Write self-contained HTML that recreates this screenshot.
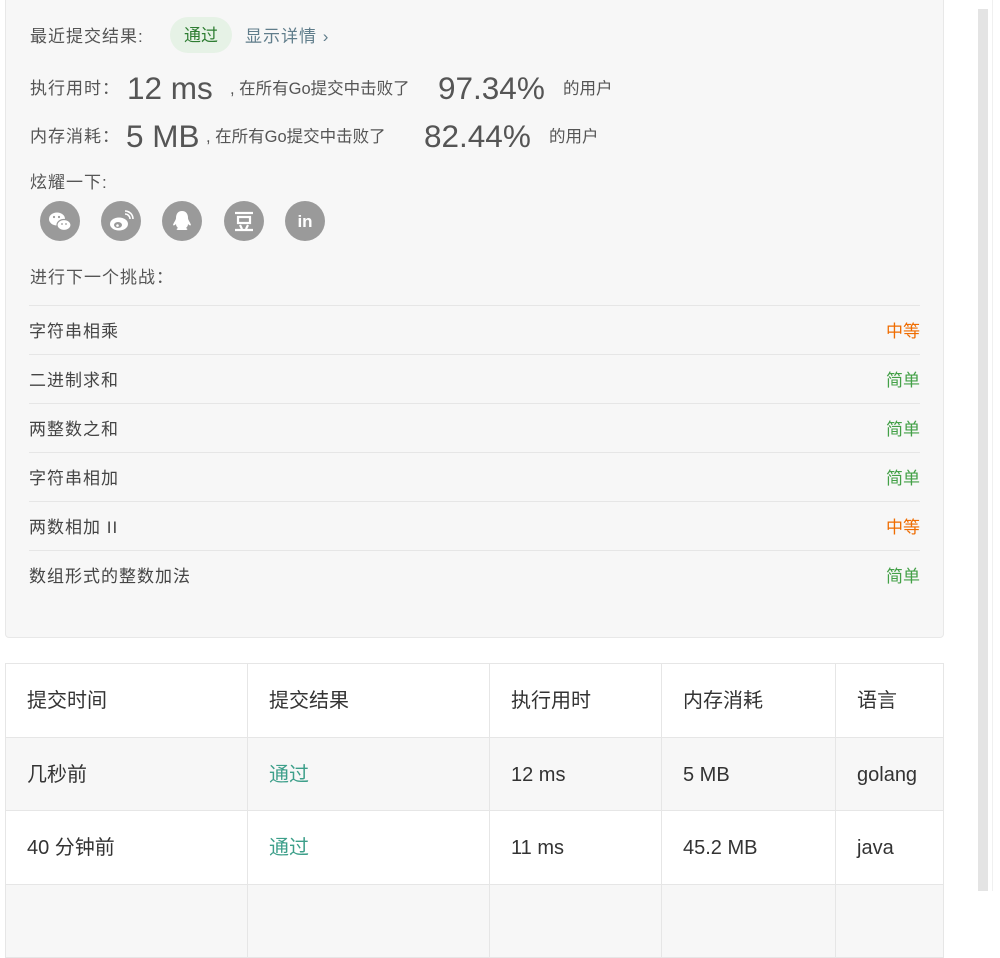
<!DOCTYPE html>
<html><head><meta charset="utf-8"><style>
*{margin:0;padding:0;box-sizing:border-box}
body{width:1000px;height:891px;overflow:hidden;background:#fff;font-family:"Liberation Sans","Noto Sans CJK SC",sans-serif;color:#555;position:relative}
.a{position:absolute;white-space:nowrap}
.panel{position:absolute;left:5px;top:-10px;width:939px;height:648px;background:#f7f7f7;border:1px solid #e8e8e8;border-radius:4px}
.lbl{font-size:17px;color:#555;letter-spacing:1px;line-height:20px}
.sm{font-size:16.5px;color:#555;line-height:20px}
.big{font-size:31.5px;color:#555;line-height:36px}
.ic{position:absolute;top:201px;width:40px;height:40px;border-radius:50%;background:#9a9a9a}
.ic svg{position:absolute;left:0;top:0}
.row{position:absolute;left:29px;width:891px;height:49px;border-top:1px solid #e6e6e6;font-size:17px;color:#444;letter-spacing:1px}
.row span{position:absolute;left:0;top:16px;line-height:20px}
.row b{position:absolute;right:0;top:16px;font-weight:normal;line-height:20px;letter-spacing:0}
.m{color:#ef6c00}.e{color:#43a047}
table{position:absolute;left:5px;top:663px;border-collapse:collapse;width:939px;font-size:20px;color:#333}
td{border:1px solid #e6e6e6;padding-left:21px;height:73.5px;vertical-align:middle;line-height:24px;padding-top:2px}
tr.s td{background:#f7f7f7}
.g{color:#3d9f8a}
</style></head><body>
<div class="panel"></div>
<div class="a lbl" style="left:30px;top:27px">最近提交结果:</div>
<div class="a" style="left:170px;top:17px;width:62px;height:36px;border-radius:18px;background:#e6f2e6;color:#2e7d32;font-size:17px;text-align:center;line-height:37px">通过</div>
<div class="a" style="left:245px;top:27px;font-size:17px;line-height:20px;letter-spacing:1px;color:#607d8b">显示详情 ›</div>
<div class="a lbl" style="left:30px;top:79px">执行用时：</div>
<div class="a big" style="left:127px;top:70px">12 ms</div>
<div class="a sm" style="left:230px;top:79px">, 在所有Go提交中击败了</div>
<div class="a big" style="left:438px;top:70px">97.34%</div>
<div class="a sm" style="left:563px;top:79px">的用户</div>
<div class="a lbl" style="left:30px;top:127px">内存消耗：</div>
<div class="a big" style="left:126px;top:118px">5 MB</div>
<div class="a sm" style="left:206px;top:127px">, 在所有Go提交中击败了</div>
<div class="a big" style="left:424px;top:118px">82.44%</div>
<div class="a sm" style="left:549px;top:127px">的用户</div>
<div class="a lbl" style="left:30px;top:173px">炫耀一下:</div>
<div class="ic" style="left:40px"><svg width="40" height="40"><ellipse cx="17" cy="18" rx="8" ry="6.5" fill="#fff"/><ellipse cx="24" cy="24" rx="7" ry="5.5" fill="#fff" stroke="#9a9a9a" stroke-width="1.2"/><circle cx="14" cy="16" r="1.1" fill="#9a9a9a"/><circle cx="19" cy="16" r="1.1" fill="#9a9a9a"/><circle cx="22" cy="23" r="0.9" fill="#9a9a9a"/><circle cx="26" cy="23" r="0.9" fill="#9a9a9a"/></svg></div>
<div class="ic" style="left:101px"><svg width="40" height="40"><ellipse cx="18" cy="23" rx="9" ry="6.5" fill="#fff"/><ellipse cx="17" cy="24" rx="4" ry="3" fill="#9a9a9a"/><circle cx="16.5" cy="24.5" r="1.3" fill="#fff"/><path d="M24 13a5 5 0 0 1 5 5M24 10a8 8 0 0 1 8 8" stroke="#fff" stroke-width="1.6" fill="none"/></svg></div>
<div class="ic" style="left:162px"><svg width="40" height="40"><path d="M20 10c-4 0-6 3-6 7 0 2-2 4-3 7 1 1 2 0 3-1 0 2 1 3 2 4-2 1-2 2 1 2h6c3 0 3-1 1-2 1-1 2-2 2-4 1 1 2 2 3 1-1-3-3-5-3-7 0-4-2-7-6-7z" fill="#fff"/></svg></div>
<div class="ic" style="left:224px"><svg width="40" height="40"><path d="M11 12h18M14 16h12v6H14zM16 24l2 4M24 24l-2 4M11 29h18" stroke="#fff" stroke-width="2.2" fill="none"/></svg></div>
<div class="ic" style="left:285px"><svg width="40" height="40"><text x="20" y="26" text-anchor="middle" font-family="Liberation Sans" font-weight="bold" font-size="17" fill="#fff">in</text></svg></div>
<div class="a lbl" style="left:30px;top:268px">进行下一个挑战：</div>
<div class="row" style="top:305px"><span>字符串相乘</span><b class="m">中等</b></div>
<div class="row" style="top:354px"><span>二进制求和</span><b class="e">简单</b></div>
<div class="row" style="top:403px"><span>两整数之和</span><b class="e">简单</b></div>
<div class="row" style="top:452px"><span>字符串相加</span><b class="e">简单</b></div>
<div class="row" style="top:501px"><span>两数相加 II</span><b class="m">中等</b></div>
<div class="row" style="top:550px"><span>数组形式的整数加法</span><b class="e">简单</b></div>
<table>
<tr><td style="width:242px">提交时间</td><td style="width:242px">提交结果</td><td style="width:172px">执行用时</td><td style="width:174px">内存消耗</td><td>语言</td></tr>
<tr class="s"><td>几秒前</td><td class="g">通过</td><td>12 ms</td><td>5 MB</td><td>golang</td></tr>
<tr><td>40 分钟前</td><td class="g">通过</td><td>11 ms</td><td>45.2 MB</td><td>java</td></tr>
<tr class="s"><td></td><td></td><td></td><td></td><td></td></tr>
</table>
<div class="a" style="left:978px;top:9px;width:10px;height:882px;background:#e4e4e4"></div>
<div class="a" style="left:992px;top:0;width:1px;height:891px;background:#f0f0f0"></div>
</body></html>
